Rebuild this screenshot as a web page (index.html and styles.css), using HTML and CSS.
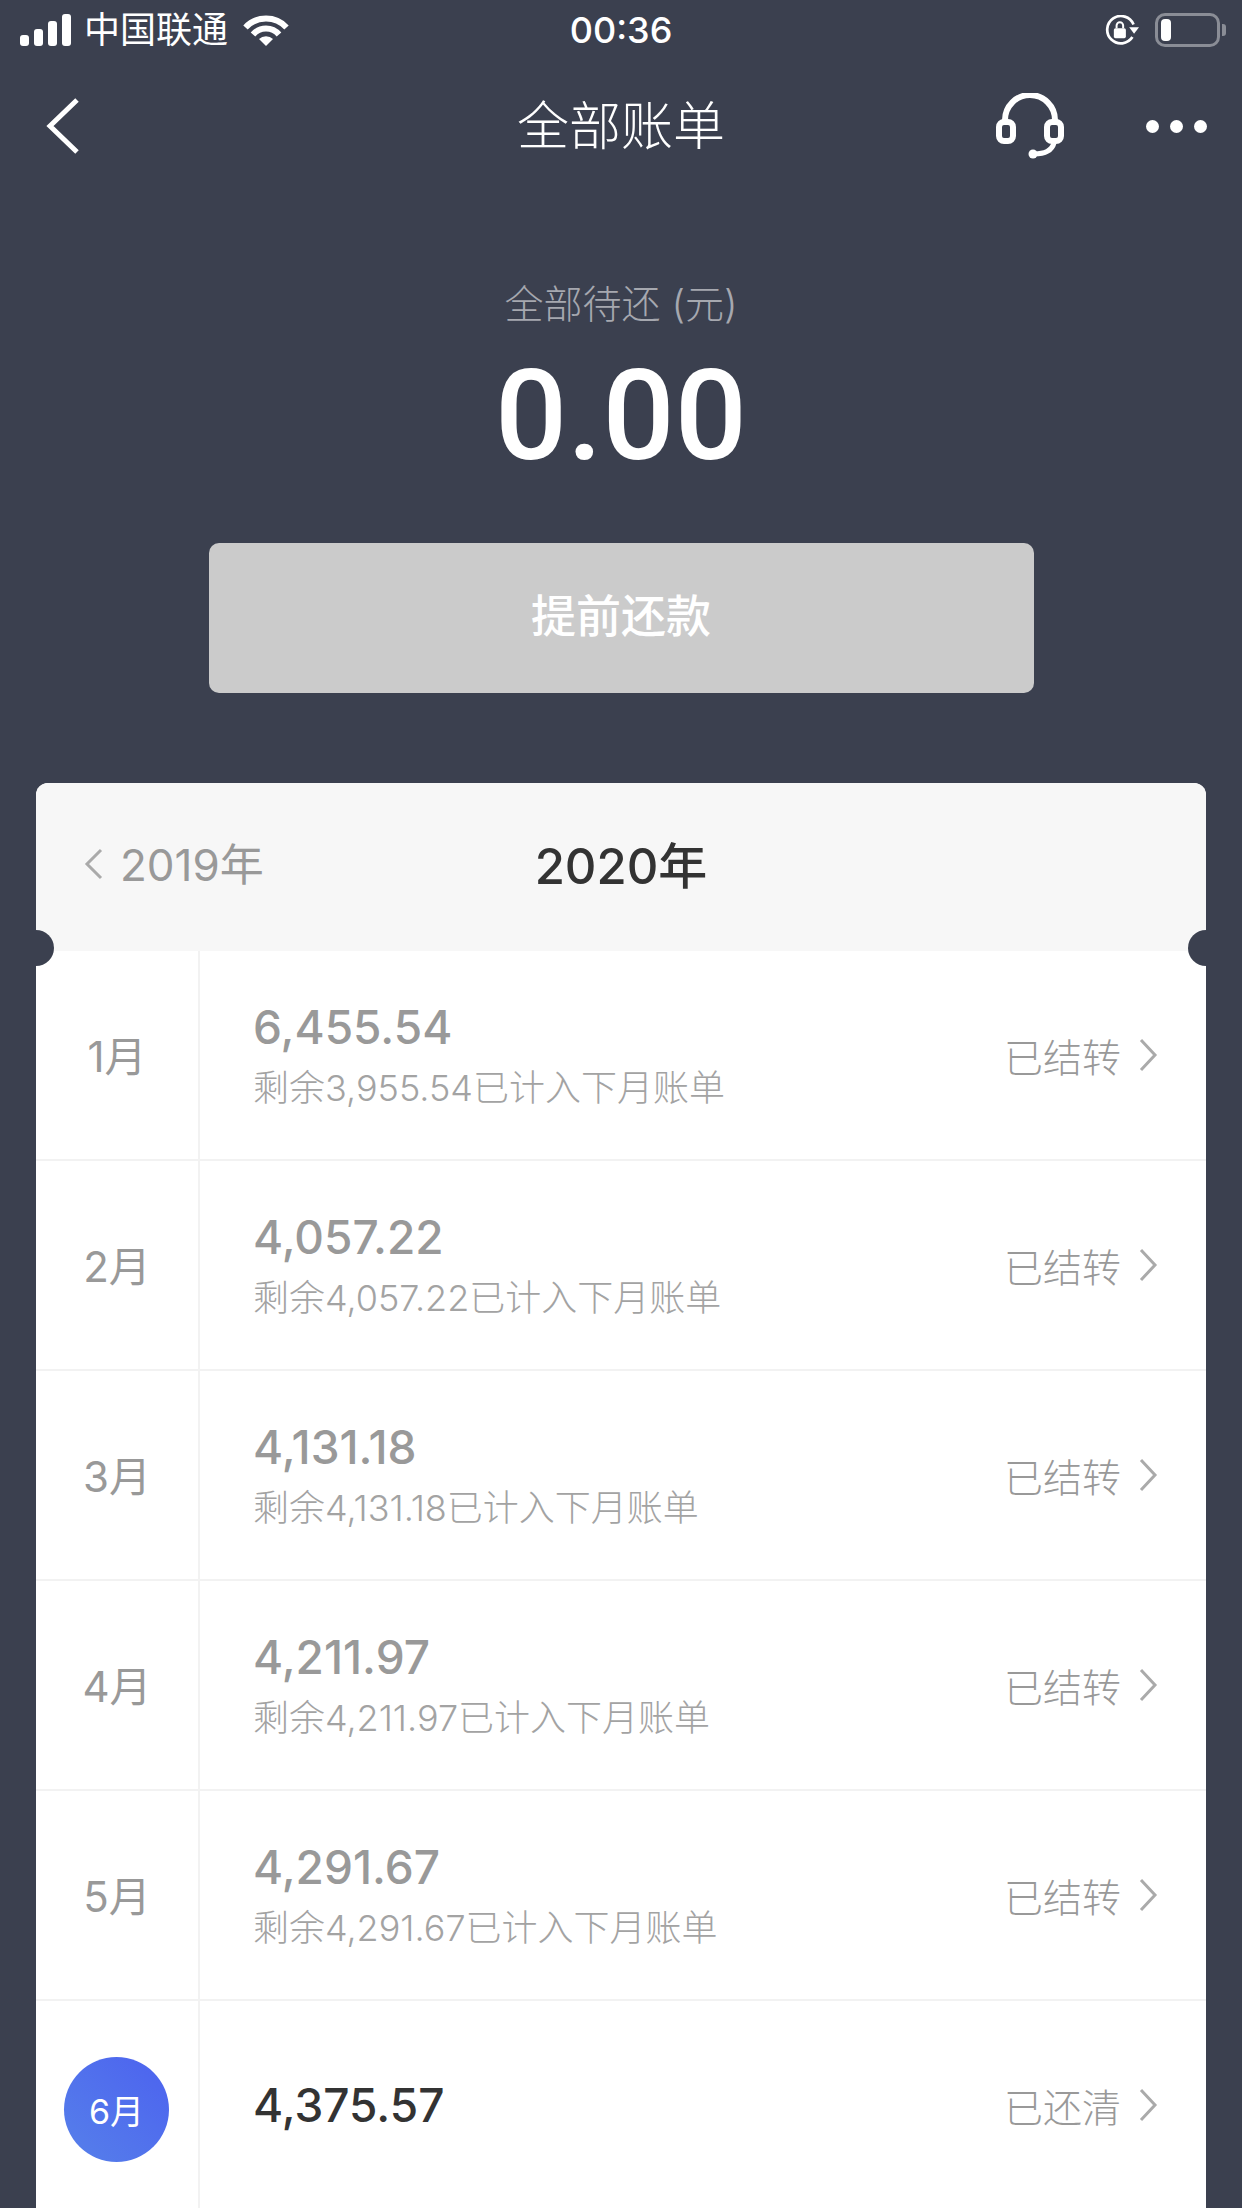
FILE: index.html
```html
<!DOCTYPE html>
<html lang="zh-CN">
<head>
    <meta charset="UTF-8">
    <meta name="viewport" content="width=device-width, initial-scale=1.0">
    <title>全部账单</title>
    <link rel="stylesheet" href="styles.css">
</head>
<body>
    <div class="status-bar">
        <div class="status-left">
            <div class="signal"><i class="s1"></i><i class="s2"></i><i class="s3"></i><i class="s4"></i></div>
            <span class="carrier">中国联通</span>
            <svg class="wifi" width="46" height="32" viewBox="0 0 46 32">
                <path d="M2.5 13.5A28 28 0 0 1 43.5 13.5" fill="none" stroke="#fff" stroke-width="6"/>
                <path d="M10 20.5A17 17 0 0 1 36 20.5" fill="none" stroke="#fff" stroke-width="6"/>
                <path d="M23 32L16 25A10 10 0 0 1 30 25Z" fill="#fff"/>
            </svg>
        </div>
        <div class="clock">00:36</div>
        <div class="status-right">
            <svg class="rotate-lock" width="35" height="31" viewBox="0 0 32 28">
                <path d="M27 8.5A12.5 12.5 0 1 0 26 20" fill="none" stroke="#fff" stroke-width="2.5"/>
                <path d="M23 11H32L27.500 17Z" fill="#fff"/>
                <rect x="9" y="12" width="11" height="9" rx="1.500" fill="#fff"/>
                <path d="M11.500 12V9.500A3 3 0 0 1 17.500 9.500V12" fill="none" stroke="#fff" stroke-width="1.800"/>
            </svg>
            <div class="battery"><div class="battery-level"></div></div>
            <div class="battery-tip"></div>
        </div>
    </div>

    <div class="nav-bar">
        <svg class="back" width="34" height="56" viewBox="0 0 34 56">
            <path d="M31 2L4 28L31 54" fill="none" stroke="#fff" stroke-width="5"/>
        </svg>
        <div class="nav-title">全部账单</div>
        <div class="nav-actions">
            <svg class="headset" width="68" height="66" viewBox="0 0 68 66">
                <path d="M9 27A25 25 0 0 1 59 27" fill="none" stroke="#fff" stroke-width="6"/>
                <rect x="3" y="29" width="14" height="19" rx="5" fill="none" stroke="#fff" stroke-width="6"/>
                <rect x="51" y="29" width="14" height="19" rx="5" fill="none" stroke="#fff" stroke-width="6"/>
                <path d="M58 50C56 57 50 61 38 61" fill="none" stroke="#fff" stroke-width="5"/>
                <circle cx="37" cy="61" r="4.500" fill="#fff"/>
            </svg>
            <div class="more"><i></i><i></i><i></i></div>
        </div>
    </div>

    <div class="summary">
        <div class="summary-label">全部待还 (元)</div>
        <div class="summary-amount">0.00</div>
        <div class="repay-btn">提前还款</div>
    </div>

    <div class="bill-card">
        <div class="year-bar">
            <div class="year-prev">
                <svg width="20" height="32" viewBox="0 0 20 32">
                    <path d="M17 2L3 16L17 30" fill="none" stroke="#aaa" stroke-width="3"/>
                </svg>
                <span>2019年</span>
            </div>
            <div class="year-current">2020年</div>
        </div>

        <div class="bill-row">
            <div class="month"><span>1月</span></div>
            <div class="bill-info">
                <div class="bill-amount">6,455.54</div>
                <div class="bill-note">剩余3,955.54已计入下月账单</div>
            </div>
            <div class="bill-status">已结转
                <svg width="20" height="34" viewBox="0 0 20 34"><path d="M3 2L17 17L3 32" fill="none" stroke="#aaa" stroke-width="3"/></svg>
            </div>
        </div>
        <div class="bill-row">
            <div class="month"><span>2月</span></div>
            <div class="bill-info">
                <div class="bill-amount">4,057.22</div>
                <div class="bill-note">剩余4,057.22已计入下月账单</div>
            </div>
            <div class="bill-status">已结转
                <svg width="20" height="34" viewBox="0 0 20 34"><path d="M3 2L17 17L3 32" fill="none" stroke="#aaa" stroke-width="3"/></svg>
            </div>
        </div>
        <div class="bill-row">
            <div class="month"><span>3月</span></div>
            <div class="bill-info">
                <div class="bill-amount">4,131.18</div>
                <div class="bill-note">剩余4,131.18已计入下月账单</div>
            </div>
            <div class="bill-status">已结转
                <svg width="20" height="34" viewBox="0 0 20 34"><path d="M3 2L17 17L3 32" fill="none" stroke="#aaa" stroke-width="3"/></svg>
            </div>
        </div>
        <div class="bill-row">
            <div class="month"><span>4月</span></div>
            <div class="bill-info">
                <div class="bill-amount">4,211.97</div>
                <div class="bill-note">剩余4,211.97已计入下月账单</div>
            </div>
            <div class="bill-status">已结转
                <svg width="20" height="34" viewBox="0 0 20 34"><path d="M3 2L17 17L3 32" fill="none" stroke="#aaa" stroke-width="3"/></svg>
            </div>
        </div>
        <div class="bill-row">
            <div class="month"><span>5月</span></div>
            <div class="bill-info">
                <div class="bill-amount">4,291.67</div>
                <div class="bill-note">剩余4,291.67已计入下月账单</div>
            </div>
            <div class="bill-status">已结转
                <svg width="20" height="34" viewBox="0 0 20 34"><path d="M3 2L17 17L3 32" fill="none" stroke="#aaa" stroke-width="3"/></svg>
            </div>
        </div>
        <div class="bill-row current">
            <div class="month"><span class="month-badge">6月</span></div>
            <div class="bill-info">
                <div class="bill-amount">4,375.57</div>
            </div>
            <div class="bill-status">已还清
                <svg width="20" height="34" viewBox="0 0 20 34"><path d="M3 2L17 17L3 32" fill="none" stroke="#aaa" stroke-width="3"/></svg>
            </div>
        </div>
    </div>
</body>
</html>
```

FILE: styles.css
```css
* {
    box-sizing: border-box;
}
html, body {
    height: 2208px;
}
body {
    margin: 0;
    overflow: hidden;
    background-color: #3b404f;
    color: #fff;
    font-family: Inter, "Noto Sans CJK SC", sans-serif;
}

/* 状态栏 */
.status-bar {
    display: grid;
    grid-template-columns: 1fr auto 1fr;
    align-items: center;
    height: 60px;
    padding: 0 16px;
}
.status-left {
    display: flex;
    align-items: center;
    padding-left: 4px;
}
.signal {
    display: flex;
    align-items: flex-end;
    gap: 5px;
    height: 32px;
}
.signal i {
    width: 9px;
    background-color: #fff;
    border-radius: 3px;
}
.s1 { height: 11px; }
.s2 { height: 17px; }
.s3 { height: 25px; }
.s4 { height: 32px; }
.carrier {
    margin-left: 13px;
    font-size: 36px;
    line-height: 60px;
}
.wifi {
    margin-left: 15px;
}
.clock {
    font-size: 36px;
    font-weight: 500;
    line-height: 60px;
}
.status-right {
    display: flex;
    align-items: center;
    justify-content: flex-end;
}
.battery {
    width: 65px;
    height: 34px;
    margin-left: 16px;
    padding: 3px;
    border: 3px solid #8a8d96;
    border-radius: 10px;
}
.battery-level {
    width: 10px;
    height: 22px;
    background-color: #fff;
    border-radius: 4px;
}
.battery-tip {
    width: 4px;
    height: 12px;
    margin-left: 2px;
    background-color: #8a8d96;
    border-radius: 0 3px 3px 0;
}

/* 导航栏 */
.nav-bar {
    display: grid;
    grid-template-columns: 1fr auto 1fr;
    align-items: center;
    height: 130px;
    padding: 0 35px;
}
.back {
    margin-left: 11px;
}
.nav-title {
    padding-top: 2px;
    font-size: 52px;
    font-weight: 300;
    line-height: 130px;
}
.nav-actions {
    display: flex;
    align-items: center;
    justify-content: flex-end;
    gap: 82px;
}
.more {
    display: flex;
    gap: 11px;
}
.more i {
    width: 13px;
    height: 13px;
    background-color: #fff;
    border-radius: 50%;
}

/* 待还金额 */
.summary {
    display: flex;
    flex-direction: column;
    align-items: center;
    padding-top: 89px;
}
.summary-label {
    font-size: 39px;
    font-weight: 300;
    line-height: 50px;
    color: #a6a8af;
}
.summary-amount {
    margin-top: 17px;
    font-family: Roboto, sans-serif;
    font-size: 127px;
    font-weight: 500;
    line-height: 140px;
}
.repay-btn {
    width: 825px;
    height: 150px;
    margin-top: 57px;
    background-color: #cbcbcb;
    border-radius: 10px;
    font-size: 45px;
    font-weight: 500;
    line-height: 148px;
    text-align: center;
}

/* 账单卡片 */
.bill-card {
    position: relative;
    margin: 90px 36px 0;
    background-color: #fff;
    border-radius: 12px 12px 0 0;
    overflow: hidden;
}
.bill-card::before, .bill-card::after {
    content: "";
    position: absolute;
    top: 147px;
    width: 36px;
    height: 36px;
    background-color: #3b404f;
    border-radius: 50%;
}
.bill-card::before { left: -18px; }
.bill-card::after { right: -18px; }
.year-bar {
    display: grid;
    grid-template-columns: 1fr auto 1fr;
    align-items: center;
    height: 168px;
    padding: 0 48px 10px;
    background-color: #f7f7f7;
}
.year-prev {
    display: flex;
    align-items: center;
    gap: 16px;
    font-size: 44px;
    color: #999;
}
.year-prev svg {
    margin-top: 4px;
}
.year-current {
    font-size: 49px;
    font-weight: 500;
    color: #333;
}
.bill-row {
    display: flex;
    align-items: center;
    height: 210px;
    border-bottom: 2px solid #f2f2f2;
}
.month {
    display: flex;
    align-items: center;
    justify-content: center;
    align-self: stretch;
    flex: none;
    width: 164px;
    padding-bottom: 3px;
    border-right: 2px solid #f2f2f2;
    font-size: 42px;
    color: #999;
}
.current .month {
    padding-bottom: 0;
}
.month-badge {
    display: flex;
    align-items: center;
    justify-content: center;
    width: 105px;
    height: 105px;
    margin: 8px 1px 0 0;
    background: linear-gradient(225deg, #4c62ef, #5680ea);
    border-radius: 50%;
    font-size: 34px;
    color: #fff;
}
.bill-info {
    flex: 1;
    padding: 0 0 2px 53px;
}
.current .bill-info {
    padding-bottom: 0;
}
.bill-amount {
    font-size: 46px;
    font-weight: 500;
    line-height: 58px;
    color: #999;
}
.current .bill-amount {
    color: #333;
}
.bill-note {
    margin-top: 9px;
    font-size: 36px;
    font-weight: 300;
    line-height: 46px;
    color: #a3a3a3;
}
.bill-status {
    display: flex;
    align-items: center;
    gap: 17px;
    padding-right: 48px;
    font-size: 39px;
    font-weight: 300;
    color: #999;
}
```
